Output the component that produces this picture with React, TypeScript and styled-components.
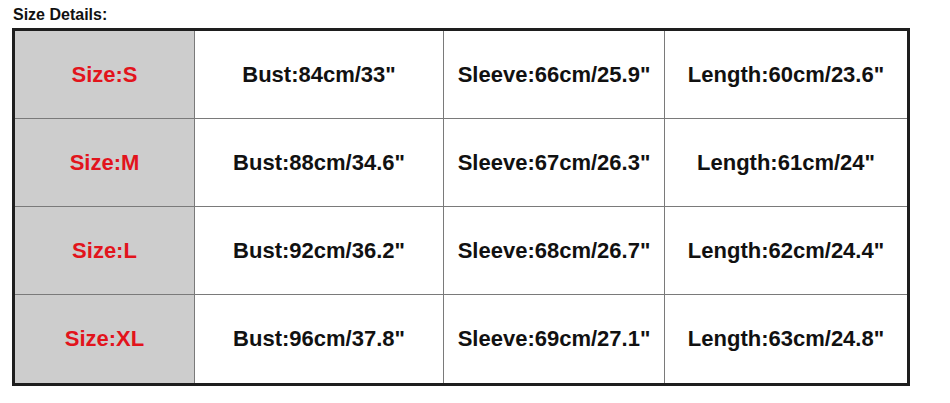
import styled, { createGlobalStyle } from "styled-components";

const GlobalStyle = createGlobalStyle`
  body {
    margin: 0;
    background: #ffffff;
    font-family: "Liberation Sans", Arial, sans-serif;
  }
`;

const Page = styled.div`
  padding: 5px 0 0 12px;
  width: 950px;
  height: 403px;
  box-sizing: border-box;
`;

const Title = styled.div`
  font-size: 16px;
  line-height: 20px;
  font-weight: bold;
  color: #111;
  padding-left: 1px;
  margin-bottom: 3px;
`;

const Grid = styled.div`
  display: grid;
  grid-template-columns: 180px 249px 221px 242px;
  grid-auto-rows: 88px;
  width: max-content;
  border: 3px solid #1e1e1e;
`;

const Cell = styled.div<{ $head?: boolean; $lastCol?: boolean; $lastRow?: boolean }>`
  box-sizing: border-box;
  display: flex;
  align-items: center;
  justify-content: center;
  font-size: 22px;
  font-weight: bold;
  color: ${(p) => (p.$head ? "#e2141c" : "#111")};
  background: ${(p) => (p.$head ? "#cdcdcd" : "#fff")};
  border-right: ${(p) => (p.$lastCol ? "none" : "1px solid #7a7a7a")};
  border-bottom: ${(p) => (p.$lastRow ? "none" : "1px solid #7a7a7a")};
`;

const rows = [
  ["Size:S", 'Bust:84cm/33"', 'Sleeve:66cm/25.9"', 'Length:60cm/23.6"'],
  ["Size:M", 'Bust:88cm/34.6"', 'Sleeve:67cm/26.3"', 'Length:61cm/24"'],
  ["Size:L", 'Bust:92cm/36.2"', 'Sleeve:68cm/26.7"', 'Length:62cm/24.4"'],
  ["Size:XL", 'Bust:96cm/37.8"', 'Sleeve:69cm/27.1"', 'Length:63cm/24.8"'],
];

const App = () => {
  return (
    <Page>
      <GlobalStyle />
      <Title>Size Details:</Title>
      <Grid>
        {rows.map((row, r) =>
          row.map((text, c) => (
            <Cell
              key={`${r}-${c}`}
              $head={c === 0}
              $lastCol={c === row.length - 1}
              $lastRow={r === rows.length - 1}
            >
              {text}
            </Cell>
          ))
        )}
      </Grid>
    </Page>
  );
};

export default App;
